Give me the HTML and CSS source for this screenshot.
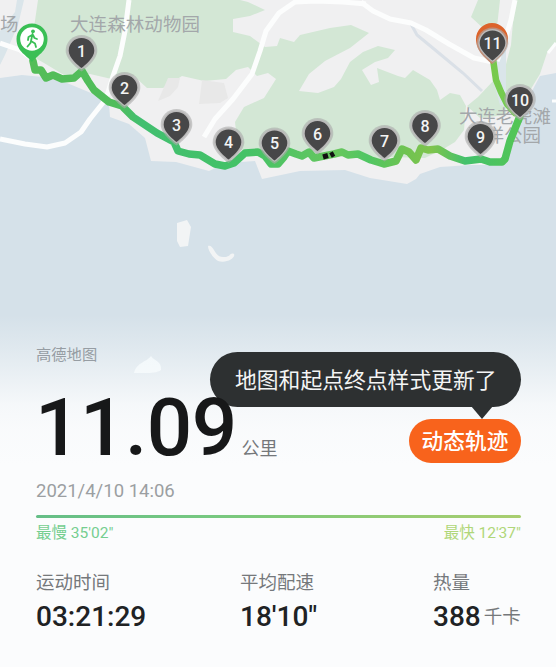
FILE: index.html
```html
<!DOCTYPE html>
<html lang="zh-CN">
<head>
<meta charset="utf-8">
<title>动态轨迹</title>
<link rel="stylesheet" href="styles.css">
</head>
<body>
<main class="screen">
  <svg class="map" viewBox="0 0 556 480" aria-hidden="true">
    <defs>
      <g id="pin">
        <path class="pin-halo" d="M0 20.500C-3 18.500-15.800 8.500-15.800-.3A15.800 15.800 0 0 1 15.800-.3C15.800 8.500 3 18.500 0 20.500Z"/>
        <path class="pin-ring" d="M0 18.500C-3 16.500-14.200 7.500-14.200-.3A14.200 14.200 0 0 1 14.200-.3C14.200 7.500 3 16.500 0 18.500Z"/>
        <path class="pin-core" d="M0 17C-3 14.500-12.800 7-12.800-.3A12.800 12.800 0 0 1 12.800-.3C12.800 7 3 14.500 0 17Z"/>
      </g>
      <linearGradient id="finish" x1="0" y1="0" x2="0" y2="1">
        <stop offset="0" stop-color="#78c84c"/><stop offset="1" stop-color="#74cd50"/>
      </linearGradient>
      <linearGradient id="route" gradientUnits="userSpaceOnUse" x1="32" y1="0" x2="525" y2="0">
        <stop offset="0" stop-color="#54bd58"/><stop offset=".17" stop-color="#50bd5b"/>
        <stop offset=".22" stop-color="#42bf70"/><stop offset=".43" stop-color="#43c266"/>
        <stop offset=".56" stop-color="#5cc562"/><stop offset=".62" stop-color="#68c75d"/>
        <stop offset=".68" stop-color="#4fc663"/><stop offset=".76" stop-color="#70c351"/>
        <stop offset=".81" stop-color="#7fc44d"/><stop offset=".88" stop-color="#43c16c"/>
        <stop offset="1" stop-color="#55c653"/>
      </linearGradient>
    </defs>
    <rect class="land" width="556" height="480"/>
    <path class="park" d="M38 0H240L248 2 265 10 250 16 233 19 233 32 250 36 265 47 277 46 280 38 294 42 300 35 330 28 351 25 369 33 350 48 325 61 309 74 299 91 318 93 334 87 341 79 350 62 363 52 378 46 395 50 388 58 375 62 362 70 371 85 379 82 377 68 398 76 405 78 413 70 430 80 437 90 440 100 450 93 460 95 466 106 464 130 455 142 445 148 425 158 390 157 370 162 345 151 315 158 238 150 235 122 244 107 264 98 276 79 268 73 257 76 248 67 236 70 226 79 204 81 182 76 163 88 147 88 134 76 116 80 90 74 64 75 44 63 30 55Z"/>
    <path class="park" d="M478 0H500L497 27 484 29 471 17ZM515 0H556V43L547 53 540 74 529 92 506 91 505 68 511 45ZM467 106 478 97 494 80 505 92 506 115 480 118Z"/>
    <path class="built" d="M202 80 224 83 228 98 220 103 199 104ZM168 78 180 78 178 87 170 96 158 101Z"/>
    <path class="sea" d="M0 78 22 75 43 77 67 83 91 93 109 104 110 117 129 124 145 138 151 161 176 162 209 171 226 163 255 161 262 179 300 171 345 170 370 178 407 184 416 179 420 174 440 167 470 165 500 165 511 150 525 104 540 76 556 73V480H0Z"/>
    <path class="sea bay" d="M496 59 506 49 506 91 515 108 500 105 493 80ZM0 31 15 12 17 0 24 0 18 25 5 55 0 65Z"/>
    <path class="stream" d="M411 24 417 35 434 49 463 73 482 91"/>
    <g class="roads">
      <path d="M0 43 20 50 35 61"/>
      <path d="M129 0 125 31 120 56 113 76 106 99 90 119 81 132 65 143 47 147 25 144 0 139"/>
      <path d="M366 4 343 2 316 1 295 2 279 13 266 31 260 51 252 74 233 99 215 119 204 137"/>
      <path d="M361 2 373 11 390 19 411 23 426 30 449 44 474 58 493 62"/>
      <path d="M515 0 511 20 504 43 497 61"/>
      <path class="thin" d="M552 101H556M556 43 548 53"/>
    </g>
    <path class="island" d="M177 223 187 220 191 227 188 246 180 247 177 241ZM208 246C214 244 214 257 223 257 230 258 230 252 234 254 236 258 226 264 218 261 212 257 208 250 208 246Z"/>
    <path class="island faint" d="M134 373C137 362 147 362 151 356 154 361 162 361 161 370 156 374 144 373 134 373Z"/>
    <g class="place">
      <text x="0" y="31">场</text>
      <text x="70" y="30.500" textLength="130">大连森林动物园</text>
      <text x="459" y="123" textLength="92">大连老虎滩</text>
      <text x="467" y="142" textLength="74">海洋公园</text>
    </g>
    <path class="track finish" d="M493 59 496 80 501 92 507 104 515 113"/>
    <path class="track" d="M33 61 35 70 41 70 46 78 53 75 62 79 74 78 82 71 88 81 94 90 109 102 122 106 133 117 157 133 174 142 178 151 189 154 200 155 215 164 225 166 234 163 245 153 258 152 265 156 271 164 278 164 284 157 288 151 296 154 302 156 309 152 314 158 324 156 334 154 342 152 348 155 358 154 371 160 384 164 396 161 402 149 409 152 416 160 421 148 428 150 438 149 450 156 465 161 481 159 490 162 502 162 505 159 510 141 520 116"/>
    <path class="gap" d="M323 157 328 155.500M330.500 155.500 334 153.500"/>
    <path class="start" d="M32 62C28 56 16.500 52 16.500 39A15.500 15.500 0 0 1 47.500 39C47.500 52 36 56 32 62Z"/>
    <circle class="start-face" cx="32" cy="39" r="11.800"/>
    <circle class="walker-head" cx="33" cy="31.300" r="1.900"/>
    <path class="walker" d="M32.500 34 31 41 35 43.500 36 47M31 41 30.500 43 27.500 46.500M32 35 28.500 37 28 40M33 35 34.500 38 37 39"/>
    <path class="end" d="M492 64C487 59 476 52 476 39A16 16 0 0 1 508 39C508 52 497 59 492 64Z"/>
    <g class="pins">
      <g transform="translate(81.500 51)"><use href="#pin"/><text y="5.500">1</text></g>
      <g transform="translate(124.500 88)"><use href="#pin"/><text y="5.500">2</text></g>
      <g transform="translate(176.500 125)"><use href="#pin"/><text y="5.500">3</text></g>
      <g transform="translate(228.500 142.500)"><use href="#pin"/><text y="5.500">4</text></g>
      <g transform="translate(274.500 143.500)"><use href="#pin"/><text y="5.500">5</text></g>
      <g transform="translate(317.500 134)"><use href="#pin"/><text y="5.500">6</text></g>
      <g transform="translate(384.500 141)"><use href="#pin"/><text y="5.500">7</text></g>
      <g transform="translate(425 126)"><use href="#pin"/><text y="5.500">8</text></g>
      <g transform="translate(480.500 137)"><use href="#pin"/><text y="5.500">9</text></g>
      <g transform="translate(520 100)"><use href="#pin"/><text y="5.500">10</text></g>
      <g transform="translate(492.500 43.500)"><use href="#pin"/><text y="5.500">11</text></g>
    </g>
  </svg>
  <section class="summary">
    <p class="source">高德地图</p>
    <div class="headline">
      <p class="distance"><span class="value">11.09</span><span class="unit">公里</span></p>
      <div class="action">
        <div class="tip">地图和起点终点样式更新了</div>
        <button class="replay">动态轨迹</button>
      </div>
    </div>
    <p class="date">2021/4/10 14:06</p>
    <div class="pace-bar"></div>
    <div class="pace"><span class="slow">最慢 35'02"</span><span class="fast">最快 12'37"</span></div>
    <dl class="stats">
      <div><dt>运动时间</dt><dd>03:21:29</dd></div>
      <div><dt>平均配速</dt><dd>18'10"</dd></div>
      <div><dt>热量</dt><dd>388<small>千卡</small></dd></div>
    </dl>
  </section>
</main>
</body>
</html>
```
FILE: styles.css
```css
* { box-sizing: border-box; margin: 0; padding: 0; }
body { background: #fbfcfd; font-family: Roboto, "Noto Sans CJK SC", sans-serif; }

.screen { position: relative; width: 556px; height: 667px; overflow: hidden; }
.map { position: absolute; left: 0; top: 0; width: 556px; height: 480px; }

.land { fill: #f0f0f1; }
.park { fill: #d3e7d5; }
.built { fill: #e8e8e8; }
.sea { fill: #d5e1e9; }
.sea.bay { fill: #dae5ea; }
.stream { fill: none; stroke: #dae0e7; stroke-width: 3; }
.roads { fill: none; stroke: #fcfdfd; stroke-width: 5; stroke-linejoin: round; }
.roads .thin { stroke-width: 3; }
.island { fill: #f2f4f5; }
.island.faint { fill: #eef6f9; }
.place { fill: #a3a7aa; font-size: 18.5px; }

.track { fill: none; stroke: url(#route); stroke-width: 7.5; stroke-linejoin: round; stroke-linecap: round; }
.track.finish { stroke: url(#finish); stroke-width: 6.5; }
.gap { fill: none; stroke: #111; stroke-width: 5; }
.start { fill: #3abf55; }
.start-face { fill: #fff; }
.walker { fill: none; stroke: #3abf55; stroke-width: 1.8; stroke-linecap: round; stroke-linejoin: round; }
.walker-head { fill: #3abf55; }
.end { fill: #dc632b; }
.pin-halo { fill: #aaa; fill-opacity: .6; }
.pin-ring { fill: #bab9b9; }
.pin-core { fill: #474748; }
.pins text { fill: #f4f4f4; font-size: 16px; font-weight: 500; text-anchor: middle; }

.summary {
  position: relative;
  height: 667px;
  padding: 345px 35px 0 36px;
  background: linear-gradient(#fbfcfd00 315px, #fbfcfd40 345px, #fbfcfd8c 375px, #fbfcfdd9 405px, #fbfcfdf2 430px, #fbfcfd 465px);
}
.source { color: #969da3; font-size: 15.3px; line-height: 20px; }
.headline { display: flex; justify-content: space-between; height: 107px; padding-top: 16px; }
.distance { position: relative; z-index: 2; display: flex; align-items: baseline; margin-left: -1px; line-height: 94px; white-space: nowrap; }
.value { color: #171819; font-size: 80px; font-weight: 500; letter-spacing: -.5px; }
.unit { margin-left: 5px; color: #74777a; font-size: 18px; line-height: 24px; }
.action { position: relative; padding-top: 38px; }
.tip {
  position: absolute; right: 0; top: -29px;
  width: 311px; height: 55px; padding-left: 25px;
  border-radius: 28px; background: #2d3031; color: #f4f5f5;
  font-size: 21.8px; line-height: 58px; white-space: nowrap;
}
.tip::after {
  content: ""; position: absolute; right: 28px; top: 54px;
  border: 11.5px solid transparent; border-top: 13px solid #2d3031; border-bottom: 0;
}
.replay {
  display: block; width: 112px; height: 44px; padding-top: 1px; border: 0; border-radius: 22px;
  background: #f8631c; color: #fff; font: 500 21.7px/43px Roboto, "Noto Sans CJK SC", sans-serif;
}
.date { margin-top: 8px; color: #9b9fa2; font-size: 18.5px; line-height: 22px; }
.pace-bar { height: 3px; margin-top: 13px; border-radius: 2px; background: linear-gradient(90deg, #65be87, #76c881 35%, #80c978 50%, #a9ce70); }
.pace { display: flex; justify-content: space-between; margin-top: 5px; font-size: 15.5px; line-height: 20px; }
.slow { color: #75ce90; }
.fast { color: #b0d779; }
.stats { display: grid; grid-template-columns: 204px 193px auto; margin-top: 28px; }
.stats dt { color: #75787b; font-size: 18.5px; line-height: 24px; }
.stats dd { display: flex; align-items: baseline; margin-top: 5px; color: #202224; font-size: 28px; font-weight: 500; line-height: 34px; white-space: nowrap; }
.stats small { margin: 0 0 1px 3px; color: #75787b; font-size: 18.5px; font-weight: 400; line-height: 28px; align-self: center; }
```
